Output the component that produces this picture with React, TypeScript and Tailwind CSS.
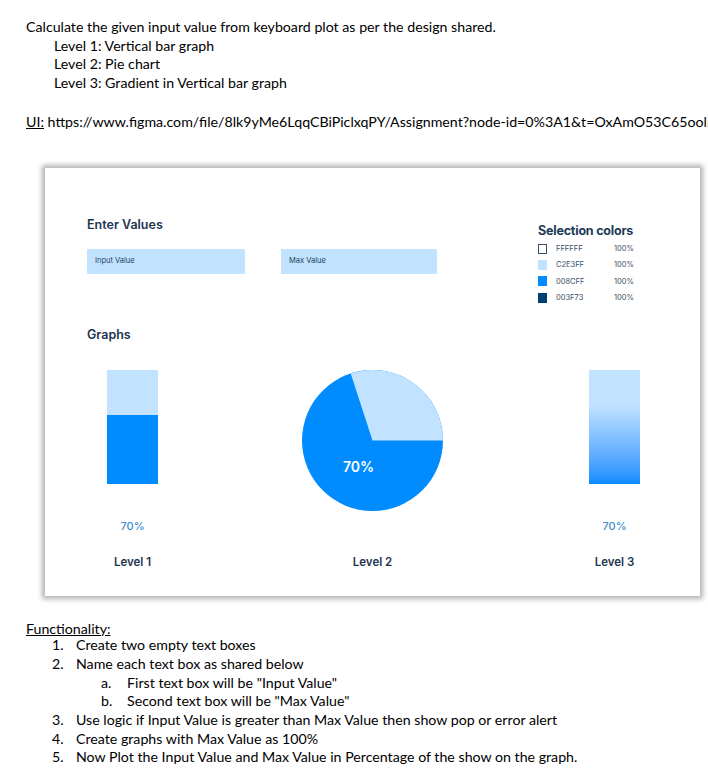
const DOC_FONT = 'font-["Lato","Open_Sans",sans-serif]';

const SWATCHES = [
  { hex: 'FFFFFF', cls: 'bg-white border border-[#3a4f66]' },
  { hex: 'C2E3FF', cls: 'bg-[#C2E3FF]' },
  { hex: '008CFF', cls: 'bg-[#008CFF]' },
  { hex: '003F73', cls: 'bg-[#003F73]' },
];

function Pie() {
  const r = 70.5;
  const c = 70.5;
  const a = (-18 * Math.PI) / 180;
  const sx = c + r * Math.sin(a);
  const sy = c - r * Math.cos(a);
  return (
    <div className="relative h-[141px] w-[141px]">
      <svg width="141" height="141" viewBox="0 0 141 141">
        <circle cx={c} cy={c} r={r} fill="#008CFF" />
        <path d={`M${c} ${c} L${sx} ${sy} A${r} ${r} 0 0 1 ${c + r} ${c} Z`} fill="#C2E3FF" />
      </svg>
      <span className="absolute left-[41px] top-[86px] text-[14px] font-semibold text-white">70%</span>
    </div>
  );
}

function Graph({ label, percent, children }: { label: string; percent?: string; children: React.ReactNode }) {
  return (
    <div className="flex flex-col items-center">
      <div className="h-[142px]">{children}</div>
      <p className="mt-[6px] h-[16px] text-[11px] leading-[16px] font-medium text-[#3d8ccb]">{percent}</p>
      <p className="mt-[20px] text-[11.5px] leading-[16px] font-semibold text-[#1e3550]">{label}</p>
    </div>
  );
}

export default function App() {
  return (
    <div className="w-[708px] h-[784px] overflow-hidden bg-white text-black">
      {/* Brief */}
      <div className={`${DOC_FONT} pl-[26px] pt-[18px] text-[14.2px] leading-[18.7px] whitespace-nowrap`}>
        <p>Calculate the given input value from keyboard plot as per the design shared.</p>
        <div className="pl-[28px]">
          <p>Level 1: Vertical bar graph</p>
          <p>Level 2: Pie chart</p>
          <p>Level 3: Gradient in Vertical bar graph</p>
        </div>
        <p className="mt-[20px]">
          <span className="underline">UI:</span>
          {'  '}https://www.figma.com/file/8lk9yMe6LqqCBiPiclxqPY/Assignment?node-id=0%3A1&amp;t=OxAmO53C65oolm
        </p>
      </div>

      {/* Design card */}
      <div className='ml-[45px] mt-[36px] h-[428px] w-[655px] bg-white font-["Inter",sans-serif] shadow-[0_0_5px_3px_rgba(0,0,0,0.3)]'>
        <div className="flex items-start justify-between pl-[42px] pr-[65px] pt-[49px]">
          <div>
            <p className="text-[12.5px] leading-[16px] font-semibold text-[#1e3550]">Enter Values</p>
            <div className="mt-[16px] flex gap-[36px]">
              <div className="flex h-[25px] w-[158px] items-center bg-[#C2E3FF] pl-[8px] text-[7.5px] text-[#24405e]">Input Value</div>
              <div className="flex h-[25px] w-[156px] items-center bg-[#C2E3FF] pl-[8px] text-[7.5px] text-[#24405e]">Max Value</div>
            </div>
          </div>
          <div className="mt-[6px] w-[97px] h-[50px] whitespace-nowrap">
            <p className="text-[12.5px] leading-[15px] font-bold text-[#1d3a5a] tracking-[-0.2px]">Selection colors</p>
            <div className="mt-[3px]">
              {SWATCHES.map((s) => (
                <div key={s.hex} className="flex h-[16.3px] items-center text-[7.5px] text-[#3a4f66]">
                  <span className={`h-[10px] w-[9px] ${s.cls}`} />
                  <span className="ml-[9px] w-[58px]">{s.hex}</span>
                  <span>100%</span>
                </div>
              ))}
            </div>
          </div>
        </div>

        <p className="mt-[53px] pl-[42px] text-[12.5px] leading-[16px] font-semibold text-[#1e3550]">Graphs</p>

        <div className="mt-[27px] flex items-start pl-[62px]">
          <Graph label="Level 1" percent="70%">
            <div className="flex h-[114px] w-[51px] flex-col">
              <div className="h-[45px] bg-[#C2E3FF]" />
              <div className="flex-1 bg-[#008CFF]" />
            </div>
          </Graph>
          <div className="ml-[144px]">
            <Graph label="Level 2">
              <Pie />
            </Graph>
          </div>
          <div className="ml-[146px]">
            <Graph label="Level 3" percent="70%">
              <div className="h-[114px] w-[51px] bg-gradient-to-b from-[#C2E3FF] from-30% to-[#008CFF]" />
            </Graph>
          </div>
        </div>
      </div>

      {/* Functionality */}
      <div className={`${DOC_FONT} pl-[26px] pt-[24px] text-[14.2px] leading-[18.7px] whitespace-nowrap`}>
        <p className="underline">Functionality:</p>
        <ol className="mt-[-2px]">
          <li className="flex"><span className="w-[50px] pl-[26px]">1.</span>Create two empty text boxes</li>
          <li className="flex"><span className="w-[50px] pl-[26px]">2.</span>Name each text box as shared below</li>
          <li className="flex"><span className="w-[101px] pl-[75px]">a.</span>First text box will be "Input Value"</li>
          <li className="flex"><span className="w-[101px] pl-[75px]">b.</span>Second text box will be "Max Value"</li>
          <li className="flex"><span className="w-[50px] pl-[26px]">3.</span>Use logic if Input Value is greater than Max Value then show pop or error alert</li>
          <li className="flex"><span className="w-[50px] pl-[26px]">4.</span>Create graphs with Max Value as 100%</li>
          <li className="flex"><span className="w-[50px] pl-[26px]">5.</span>Now Plot the Input Value and Max Value in Percentage of the show on the graph.</li>
        </ol>
      </div>
    </div>
  );
}
